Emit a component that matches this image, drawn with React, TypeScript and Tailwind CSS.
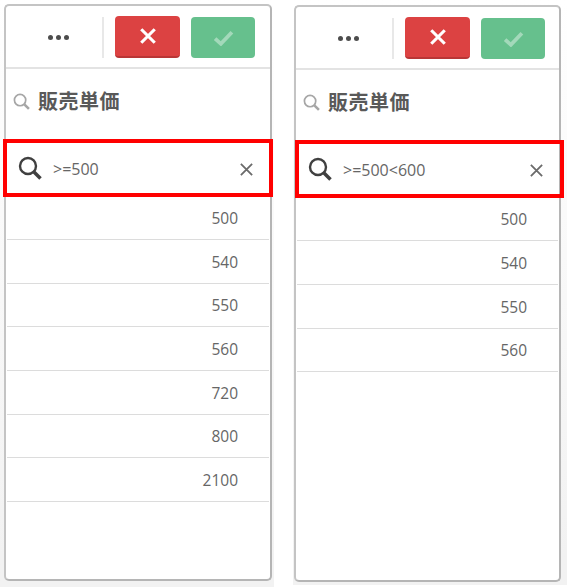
const leftValues = ["500", "540", "550", "560", "720", "800", "2100"];
const rightValues = ["500", "540", "550", "560"];

const SearchIcon = ({ className }: { className: string }) => (
  <svg viewBox="0 0 24 24" fill="none" stroke="currentColor" className={className}>
    <circle cx="10" cy="10" r="8" strokeWidth="2.4" />
    <path d="M16 16l6.5 6.5" strokeWidth="3.6" />
  </svg>
);

const CrossIcon = ({ className, width }: { className: string; width: number }) => (
  <svg viewBox="0 0 16 16" fill="none" stroke="currentColor" strokeWidth={width} className={className}>
    <path d="M2 2l12 12M14 2L2 14" />
  </svg>
);

type PanelProps = {
  query: string;
  values: string[];
  panelClass: string;
  boxClass: string;
  iconClass: string;
  clearClass: string;
  rowsClass: string;
};

const FilterPanel = ({ query, values, panelClass, boxClass, iconClass, clearClass, rowsClass }: PanelProps) => (
  <div className={`relative h-[577px] rounded-[5px] border-2 border-[#b5b5b5] border-l-[#c4c4c4] border-t-[#c4c4c4] bg-white ${panelClass}`}>
    <div className="flex items-center h-[63px] pt-[1px] border-b-2 border-[#e3e3e3]">
      <div className="w-[98px] h-[41px] flex items-center justify-center gap-[3px] border-r-2 border-[#e8e8e8] pl-[9px]">
        <span className="w-[5px] h-[5px] rounded-full bg-[#4d4d4d]" />
        <span className="w-[5px] h-[5px] rounded-full bg-[#4d4d4d]" />
        <span className="w-[5px] h-[5px] rounded-full bg-[#4d4d4d]" />
      </div>
      <div className="ml-[11px] w-[65px] h-[42px] rounded-[4px] bg-[#dc4242] border-b-2 border-[#b93636] flex items-center justify-center">
        <CrossIcon className="w-[18px] h-[18px] text-white" width={2.8} />
      </div>
      <div className="ml-[11px] w-[64px] h-[41px] rounded-[4px] bg-[#66c08d] flex items-center justify-center">
        <svg viewBox="0 0 20 16" fill="none" stroke="#a3d9ba" strokeWidth="3.6" className="w-[21px] h-[17px]">
          <path d="M2 9l5.5 5L18 3" />
        </svg>
      </div>
    </div>
    <div className="flex items-center h-[64px] pl-[7px] font-['Noto_Sans_CJK_JP',sans-serif]">
      <SearchIcon className="w-[17px] h-[17px] text-[#a6a6a6]" />
      <span className="ml-[8px] text-[20px] font-bold text-[#595959] tracking-[0.5px]">販売単価</span>
    </div>
    <div className={`absolute top-[133px] h-[58px] border-[4px] border-[#ff0000] flex items-center ${boxClass}`}>
      <SearchIcon className={`w-[24px] h-[24px] text-[#404040] ${iconClass}`} />
      <span className="ml-[11px] pt-[2px] text-[16px] text-[#666666] font-['Open_Sans',sans-serif]">{query}</span>
      <CrossIcon className={`absolute top-[19px] w-[15px] h-[15px] text-[#6b6b6b] ${clearClass}`} width={1.9} />
    </div>
    <div className={`mx-[1px] ${rowsClass}`}>
      {values.map((v) => (
        <div
          key={v}
          className="h-[43.7px] flex items-center justify-end pt-[2px] pr-[31px] border-b border-[#dcdcdc] text-[15.5px] text-[#666666] font-['Open_Sans',sans-serif]"
        >
          {v}
        </div>
      ))}
    </div>
  </div>
);

export default function App() {
  return (
    <div className="w-[567px] h-[587px] bg-white flex font-['Open_Sans',sans-serif]">
      <div className="w-[274px] h-[587px] bg-linear-to-b from-white to-[#f2f2f2] to-95% pt-[4px] pl-[4px]">
        <FilterPanel
          query=">=500"
          values={leftValues}
          panelClass="w-[268px]"
          boxClass="left-[-3px] w-[270px]"
          iconClass="ml-[11px]"
          clearClass="left-[232px]"
          rowsClass="mt-[63.3px]"
        />
      </div>
      <div className="ml-[19px] w-[274px] h-[585px] bg-linear-to-b from-white to-[#f2f2f2] to-95% pt-[5px] pl-[1px]">
        <FilterPanel
          query=">=500<600"
          values={rightValues}
          panelClass="w-[267px]"
          boxClass="left-[-1px] w-[269px]"
          iconClass="ml-[9px]"
          clearClass="left-[230px]"
          rowsClass="mt-[63.6px]"
        />
      </div>
    </div>
  );
}
